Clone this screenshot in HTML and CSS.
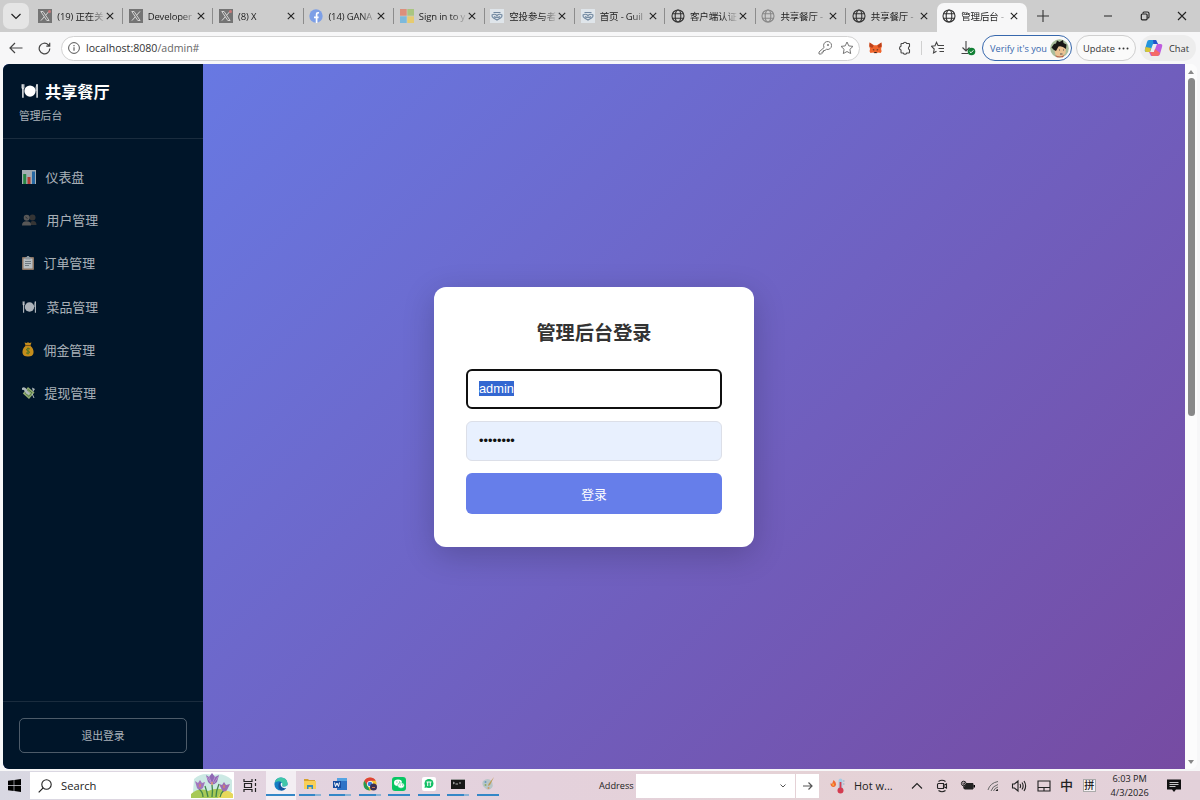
FILE: index.html
```html
<!DOCTYPE html>
<html lang="zh-CN">
<head>
    <meta charset="UTF-8">
    <meta name="viewport" content="width=device-width, initial-scale=1.0">
    <title>管理后台 - 共享餐厅</title>
    <link rel="stylesheet" href="styles.css">
</head>
<body>

<!-- shared icons -->
<svg class="sprite" aria-hidden="true">
    <symbol id="close" viewBox="0 0 8 8"><path d="M.8.8l6.4 6.4M7.2.8L.8 7.2" fill="none" stroke="#222" stroke-width="1.1"/></symbol>
    <symbol id="globe" viewBox="0 0 14 14"><g fill="none" stroke="currentColor" stroke-width="1.1"><circle cx="7" cy="7" r="6"/><ellipse cx="7" cy="7" rx="2.8" ry="6"/><path d="M1.5 4.8h11M1.5 9.2h11"/></g></symbol>
    <symbol id="x-logo" viewBox="0 0 14 14"><path fill="#747474" d="M0 0h14v14H0z"/><path d="M2.8 2.5h2.3l6 9H8.8z" fill="#747474" stroke="#ddd" stroke-width=".9"/><path d="M11 2.4L7.5 6.3M6.3 7.8l-3.4 3.8" stroke="#ddd"/></symbol>
    <symbol id="guild" viewBox="0 0 14 14"><path fill="#dfe5ea" d="M0 0h14v14H0z"/><path d="M2 6q2.500-1.700 5 .5Q9.500 4.300 12 6q.3 2-1.500 3L7 11 3.500 9Q1.700 8 2 6zM4 7.500q1.500 1.500 3 .5 1.500 1 3-.5M3.500 3.500h7" fill="none" stroke="#7188a0" stroke-width="1.100"/></symbol>
    <symbol id="plate" viewBox="0 0 16 14"><circle cx="8" cy="7" r="5"/><path d="M1.700 1v12M14.300 1v12" stroke="currentColor" stroke-width="1.200"/><path d="M.8 1v3.600h1.900V1M14.200 1q-1.300 2.500-.8 6" fill="none" stroke="currentColor" stroke-width=".6"/></symbol>
</svg>

<header class="browser">
    <div class="tab-strip">
        <button class="tab-menu"><svg width="12" height="8" viewBox="0 0 12 8"><path d="M1.500 2L6 6.500 10.500 2" fill="none" stroke="#222" stroke-width="1.200"/></svg></button>
        <div class="tab">
            <svg class="favicon"><use href="#x-logo"/><circle cx="11.500" cy="2.500" r="1.500" fill="#c97979"/></svg>
            <span class="tab-title">(19) 正在关</span><svg class="tab-close"><use href="#close"/></svg>
        </div>
        <div class="tab">
            <svg class="favicon"><use href="#x-logo"/></svg>
            <span class="tab-title">Developer</span><svg class="tab-close"><use href="#close"/></svg>
        </div>
        <div class="tab">
            <svg class="favicon"><use href="#x-logo"/><circle cx="11.500" cy="2.500" r="1.500" fill="#c97979"/></svg>
            <span class="tab-title">(8) X</span><svg class="tab-close"><use href="#close"/></svg>
        </div>
        <div class="tab">
            <svg class="favicon" viewBox="0 0 14 14"><circle cx="7" cy="7" r="6.700" fill="#7d9fe6"/><path d="M7.600 14V8.300M5 8.300h4.600M7.600 9V5.400q0-1.900 2.400-1.600" fill="none" stroke="#fff" stroke-width="1.700"/></svg>
            <span class="tab-title">(14) GANA</span><svg class="tab-close"><use href="#close"/></svg>
        </div>
        <div class="tab">
            <svg class="favicon" viewBox="0 0 14 14"><path fill="#dc8f7c" d="M0 0h6.700v6.700H0z"/><path fill="#a9c581" d="M7.300 0H14v6.700H7.300z"/><path fill="#7cb9dc" d="M0 7.300h6.700V14H0z"/><path fill="#e6cb70" d="M7.300 7.300H14V14H7.300z"/></svg>
            <span class="tab-title">Sign in to y</span><svg class="tab-close"><use href="#close"/></svg>
        </div>
        <div class="tab">
            <svg class="favicon"><use href="#guild"/></svg>
            <span class="tab-title">空投参与者</span><svg class="tab-close"><use href="#close"/></svg>
        </div>
        <div class="tab">
            <svg class="favicon"><use href="#guild"/></svg>
            <span class="tab-title">首页 - Guil</span><svg class="tab-close"><use href="#close"/></svg>
        </div>
        <div class="tab">
            <svg class="favicon"><use href="#globe"/></svg>
            <span class="tab-title">客户端认证</span><svg class="tab-close"><use href="#close"/></svg>
        </div>
        <div class="tab">
            <svg class="favicon faded"><use href="#globe"/></svg>
            <span class="tab-title">共享餐厅 -</span><svg class="tab-close"><use href="#close"/></svg>
        </div>
        <div class="tab last">
            <svg class="favicon"><use href="#globe"/></svg>
            <span class="tab-title">共享餐厅 -</span><svg class="tab-close"><use href="#close"/></svg>
        </div>
        <div class="tab active">
            <svg class="favicon"><use href="#globe"/></svg>
            <span class="tab-title">管理后台 -</span><svg class="tab-close"><use href="#close"/></svg>
        </div>
        <svg class="new-tab" viewBox="0 0 12 12"><path d="M6 0v12M0 6h12" stroke="#333" stroke-width="1.100"/></svg>
        <div class="window-controls">
            <svg viewBox="0 0 10 10"><path d="M1 5h8" stroke="#222"/></svg>
            <svg viewBox="0 0 10 10"><path d="M3 2.500V2q0-1 1-1h3.500Q9 1 9 2.500V6q0 1-1 1h-.5" fill="none" stroke="#222" stroke-width="1.100"/><rect x="1.300" y="3" width="5.800" height="5.800" rx="1" fill="none" stroke="#222" stroke-width="1.200"/></svg>
            <svg viewBox="0 0 10 10"><path d="M1 1l8 8M9 1L1 9" stroke="#222" stroke-width="1.100"/></svg>
        </div>
    </div>

    <div class="toolbar">
        <svg class="back" viewBox="0 0 14 12"><path d="M13.500 6H1M6 1L1 6l5 5" fill="none" stroke="#444" stroke-width="1.200"/></svg>
        <svg class="reload" viewBox="0 0 13 13"><path d="M11.800 6.500a5.300 5.300 0 1 1-1.600-3.800L11.500 4M11.700.8v3.400H8.300" fill="none" stroke="#444" stroke-width="1.200"/></svg>
        <div class="address-bar">
            <svg width="12" height="12" viewBox="0 0 12 12"><circle cx="6" cy="6" r="5.400" fill="none" stroke="#555"/><path d="M6 5.200v3.600M6 3v1.200" stroke="#555" stroke-width="1.100"/></svg>
            <span class="url">localhost:8080<span class="path">/admin#</span></span>
            <svg width="14" height="14" viewBox="0 0 14 14"><g fill="none" stroke="#777"><path d="M6.100 6.500A4 4 0 1 1 8.300 8.300L7 9.500H5.500V11H4v1.500L3.500 13H1v-2z"/><circle cx="10" cy="4" r=".7"/></g></svg>
            <svg class="star" width="14" height="14" viewBox="0 0 14 14"><path d="M7 1l1.800 3.900 4.200.5-3.100 2.900.8 4.300L7 10.500l-3.700 2.100.8-4.300L1 5.400l4.200-.5z" fill="none" stroke="#777"/></svg>
        </div>
        <svg class="fox" viewBox="0 0 14 12"><path d="M.7 0L5.500 3h3l4.800-3 .5 4-.8 3 .6 2.500-1 2-3-.7-1 .8h-3l-1-.8-3 .7-1-2L1.100 7 .3 4z" fill="#f0642b"/><path d="M.7 0L5 3.500 3.500 6 .4 4.500zM13.300 0L9 3.500 10.500 6l3.100-1.500z" fill="#b8401c"/><path d="M3.800 7l2.200 1-.7 1zM10.200 7L8 8l.7 1zM5.700 10.200h2.600v1.200H5.700z" fill="#302b2a"/></svg>
        <svg class="ext" viewBox="0 0 14 14"><path d="M3 3.300q0-.8.800-.8H5.300a1.800 1.800 0 0 1 3.400 0h2q.8 0 .8.800v2.200a1.800 1.800 0 0 0 0 3.300v2.400q0 .8-.8.800h-2a1.800 1.800 0 0 1-3.400 0H3.800q-.8 0-.8-.8V9a1.900 1.900 0 0 1 0-3.700z" fill="none" stroke="#444" stroke-width="1.100" stroke-linejoin="round"/></svg>
        <span class="divider"></span>
        <svg class="favs" viewBox="0 0 14 14"><path d="M9 4.500H7L5.500 1.300 4 4.700l-3.500.6L3.200 8l-.7 4 3-1.700M7.500 7.500H13M8.500 10.500H13M9 4.500h4" fill="none" stroke="#444" stroke-width="1.100"/></svg>
        <svg class="download" viewBox="0 0 16 16"><path d="M6 1v10M2.500 7.500L6 11l3.500-3.500M1.500 13.500H8" fill="none" stroke="#444" stroke-width="1.100"/><circle cx="11.500" cy="11.500" r="3.800" fill="#128035"/><path d="M9.700 11.500l1.300 1.300 2.400-2.500" fill="none" stroke="#fff"/></svg>
        <button class="verify">Verify it's you
            <svg width="19" height="19" viewBox="0 0 19 19"><circle cx="9.500" cy="9.500" r="9.300" fill="#a8bd9b"/><path d="M4 9q6-5 12 0l-.5 5.500q-5 5-10 1.500z" fill="#eac293"/><path d="M1.500 8.500L4 5l2-.5 1-3 2.500 1.500L13 1l.5 3 3 1.500-.5 4.500Q12 6.500 8.500 7.500L6 12l-2-1z" fill="#181715"/><path d="M9 11h1M13 11h1M10 15h2.500" stroke="#555"/><path d="M5 16q5 3 9 0l-1 2.300H7z" fill="#c9553e"/></svg>
        </button>
        <button class="update">Update <svg width="11" height="3" viewBox="0 0 11 3"><g fill="#333"><circle cx="1.500" cy="1.500" r="1"/><circle cx="5.500" cy="1.500" r="1"/><circle cx="9.500" cy="1.500" r="1"/></g></svg></button>
        <button class="chat">
            <svg width="19" height="18" viewBox="0 0 19 18"><path d="M5 1h7l1.500 4H9L6 13H2.500Q0 13 1 10L3 3q.5-2 2-2z" fill="#2495dc"/><path d="M1.500 8L7 9l-1 4H2.500Q0 13 1.500 8z" fill="#d5c437"/><path d="M9 1h3l2 4H9.500z" fill="#2453cb"/><path d="M13 5h3.500q2.500 0 1.500 3l-2 7q-.5 2-2.500 2H7l-2-4h5z" fill="#bf5cdf"/><path d="M6 13h4l1-3 5 4q-.8 3-2.500 3H8z" fill="#f46a67"/></svg>
            Chat
        </button>
    </div>
</header>

<div class="page">
    <div class="viewport">
        <aside class="sidebar">
            <div class="sidebar-header">
                <h1><svg class="plate" width="18" height="16"><use href="#plate"/></svg>共享餐厅</h1>
                <p>管理后台</p>
            </div>
            <nav class="menu">
                <a href="#"><svg width="14" height="14" viewBox="0 0 14 14"><path fill="#a5adb2" d="M0 0h14v14H0z"/><path fill="#278644" d="M1.200 4h3v10h-3z"/><path fill="#b43c34" d="M5.500 7h3v7h-3z"/><path fill="#2869a3" d="M10 1.500h3V14h-3z"/></svg><span>仪表盘</span></a>
                <a href="#"><svg width="15" height="14" viewBox="0 0 15 14"><g fill="#353535"><circle cx="10.500" cy="4.500" r="3"/><path d="M8 12q0-4 3-4 3.500 0 3.500 4z"/></g><g fill="#575757"><circle cx="4.700" cy="4.700" r="3"/><path d="M0 12.500q0-4.200 4.500-4.200T9 12.500z"/></g><path d="M3.500 4l2 1.500" stroke="#292d33"/></svg><span>用户管理</span></a>
                <a href="#"><svg width="12" height="14" viewBox="0 0 12 14"><rect y="1" width="12" height="13" rx="1" fill="#8c7463"/><path fill="#b8bec2" d="M1.500 2.500h9v10h-9z"/><path fill="#8d969c" d="M3.500 1h1.200a1.300 1.300 0 0 1 2.600 0h1.200v2.500h-5z"/><path d="M3 5.500h6M3 7.500h6M3 9.500h4" stroke="#5c6871" stroke-width=".8"/></svg><span>订单管理</span></a>
                <a href="#"><svg class="plate" width="15" height="14"><use href="#plate"/></svg><span>菜品管理</span></a>
                <a href="#"><svg width="12" height="15" viewBox="0 0 12 15"><path d="M2.500.5l2 .6L6 .3l1.500.8 2-.6-1.200 3.200Q12 6.500 11.500 11q-.5 3.500-5.500 3.500T.5 11Q0 6.500 3.700 3.700z" fill="#c58d1b"/><path d="M3.500 3.500h5" stroke="#77501a"/><path d="M8 7Q6 5.800 4.800 7T6 9t1.500 1.700-3.500.3M6 5.500v7" fill="none" stroke="#507522"/></svg><span>佣金管理</span></a>
                <a href="#"><svg width="13" height="14" viewBox="0 0 13 14"><path d="M6 1l6.500 5.500L7 13 .8 7.500z" fill="#91aa70"/><path d="M6 3.500l4 3.300L7 10.500 3.200 7z" fill="none" stroke="#4f7744"/><path d="M0 2q3-2 5 2 1 3 3 3l-1 2Q4 8 3 6 2 3 0 4zM10 1.500l3 1.500-2 3z" fill="#aeb8bb"/><path d="M10 7.500l2 4.500" stroke="#aeb8bb"/></svg><span>提现管理</span></a>
            </nav>
            <div class="sidebar-footer">
                <button>退出登录</button>
            </div>
        </aside>

        <main>
            <form class="login-box">
                <h2>管理后台登录</h2>
                <div class="field focused"><span class="selected">admin</span></div>
                <div class="field filled"><span>••••••••</span></div>
                <button type="button">登录</button>
            </form>
        </main>
    </div>
    <div class="scrollbar">
        <svg width="6" height="4" viewBox="0 0 6 4"><path d="M3 0l3 4H0z" fill="#888"/></svg>
        <div class="thumb"></div>
        <svg class="down" width="6" height="4" viewBox="0 0 6 4"><path d="M0 0h6L3 4z" fill="#888"/></svg>
    </div>
</div>

<footer class="taskbar">
    <div class="start"><svg width="13" height="13" viewBox="0 0 13 13"><path d="M0 1.800L5.700 1v5H0zM6.300.9L13 0v6H6.300zM0 6.700h5.700v5.200L0 11.200zM6.300 6.700H13V13l-6.700-.9z"/></svg></div>
    <div class="search">
        <svg width="14" height="14" viewBox="0 0 14 14"><circle cx="8.500" cy="5.500" r="4.700" fill="none" stroke="#222" stroke-width="1.100"/><path d="M5.200 8.800L.7 13.300" stroke="#222" stroke-width="1.200"/></svg>
        <span>Search</span>
        <svg class="crocus" width="43" height="25" viewBox="0 0 43 25"><path d="M3 6q8-7 18-4 12-3 20 5v12H2z" fill="#cce9e4"/><path d="M0 21q8-7 17-3 14-6 25 4v3H0z" fill="#a6c957"/><path d="M28 22q7-8 14-1v4H27z" fill="#e6d85b"/><g fill="none" stroke="#42854b" stroke-width="1.300"><path d="M21 12q1 6 0 12M8 16q4 3 4 8M33 17q-3 3-4 7M14 13q2 6 3 11M28 11q-3 7-3 13"/></g><path d="M15 2l3 2 3-4 3 4 4-2-2 7q-5 5-9 0z" fill="#9069b5"/><path d="M18 4l3 7 3-7M16 4l4 6M27 4l-4 6" fill="none" stroke="#c49bd5" stroke-width=".8"/><path d="M4 8l3 2 2-3 2 3 3-1-2 6q-4 3-6 0z" fill="#a276bd"/><path d="M28 11l3 1 2-3 2 3 4-1-3 6q-3 3-5 0z" fill="#9c6eb4"/><path d="M21 9v3M9 11v3M33 12v3" stroke="#ec9441"/></svg>
    </div>
    <div class="task-view"><svg width="14" height="13" viewBox="0 0 14 13"><path d="M1 0v2.500h8V0M1 13v-2.500h8V13M1.500 4.500h7v4h-7zM12.500 0v2M12.500 4v3M12.500 9v4" fill="none" stroke="#222" stroke-width="1.200"/></svg></div>
    <div class="apps">
        <div class="app current"><svg viewBox="0 0 14 14"><circle cx="7" cy="7" r="6.600" fill="#147dc3"/><path d="M.5 6Q2 .4 7 .4q6 0 6.600 6 0 3-4 3.200-2 0-1.500-1Q9 5 5.500 4.300 2 4 .5 6z" fill="#40c7a8"/><path d="M4.500 8q0-3 2.500-3-1.700 4 2.500 5.500 2 .4 3-.3Q10 14 7 13.500 4 12 4.500 8z" fill="#15539d"/><path d="M7 5.800q2 .2 1.300 2-.8 1.800 1.700 1.900 2.500 0 3.500-1.600v3l-3 .2Q5.500 10 7 5.800z" fill="#eef8fa"/></svg></div>
        <div class="app multi"><svg viewBox="0 0 14 14"><path d="M1 2h4l1 1h6v3H1z" fill="#d6a12e"/><path d="M1 4h12v8H1z" fill="#f8cf59"/><path d="M4 8h6v4H8.500v-2h-3v2H4z" fill="#348bc3"/></svg></div>
        <div class="app multi"><svg viewBox="0 0 14 14"><path d="M4 1h10v12H4z" fill="#2e73c6"/><path d="M4 1h10v3H4z" fill="#55a4e3"/><path d="M0 4h8v7H0z" fill="#174b9e"/><path d="M1.500 5.500l1 4L4 6l1.500 3.500 1-4" fill="none" stroke="#fff"/></svg></div>
        <div class="app multi"><svg viewBox="0 0 14 14"><circle cx="7" cy="7" r="6.500" fill="#f4c22f"/><path d="M1.300 3.700Q3.500.5 7 .5q4 0 5.800 3.300H7L4 8.500z" fill="#df4237"/><path d="M1.300 3.700L5 9.500l2 4Q.5 13 .5 7q0-2 .8-3.300z" fill="#269953"/><circle cx="7" cy="7" r="3" fill="#fff"/><circle cx="7" cy="7" r="2.300" fill="#367adc"/><circle cx="10.500" cy="10" r="3.500" fill="#3b2e52"/><path d="M9 10.500h3" stroke="#c87956"/></svg></div>
        <div class="app"><svg viewBox="0 0 14 14"><rect width="14" height="14" rx="3" fill="#08c663"/><ellipse cx="6" cy="5.800" rx="4" ry="3.300" fill="#fff"/><ellipse cx="9" cy="8.500" rx="3.300" ry="2.700" fill="#fff" stroke="#08c663" stroke-width=".5"/><path d="M4.500 5h.8M7 5h.8M7.800 8h.7M10 8h.7" stroke="#08a951"/></svg></div>
        <div class="app"><svg viewBox="0 0 14 14"><rect width="14" height="14" rx="2" fill="#fff"/><circle cx="7" cy="6.500" r="4.500" fill="#13bf65"/><path d="M3 8l-.5 3L6 10z" fill="#13bf65"/><path d="M4.500 5h5M5.700 5v4M8.300 5v4" stroke="#fff"/></svg></div>
        <div class="app multi"><svg viewBox="0 0 14 14"><path fill="#171717" d="M0 2h14v10H0z"/><path fill="#999" d="M0 2h14v1H0z"/><path d="M2 5l1.500 1L2 7M4.500 7H7M8 6h2" fill="none" stroke="#ddd" stroke-width=".8"/></svg></div>
        <div class="app"><svg viewBox="0 0 14 14"><path d="M2 4q5-4 8.500 0 3 5-1 8-3 2-5.500-1-4-3-2-7z" fill="#b8c6c8"/><path d="M13 0L9 8l-2 1 .5-2z" fill="#bd9b54"/><circle cx="4.500" cy="5" r="1" fill="#689ac0"/><circle cx="4.500" cy="8" r="1" fill="#8faa68"/><circle cx="7.500" cy="11" r="1" fill="#cf9b62"/></svg></div>
    </div>
    <label class="address-label">Address</label>
    <div class="address-box">
        <svg width="6" height="4" viewBox="0 0 6 4"><path d="M.5.500L3 3 5.500.5" fill="none" stroke="#555"/></svg>
    </div>
    <div class="go"><svg width="10" height="8" viewBox="0 0 10 8"><path d="M0 4h9M5.500.5L9 4 5.500 7.500" fill="none" stroke="#555" stroke-width="1.200"/></svg></div>
    <div class="weather">
        <svg width="15" height="16" viewBox="0 0 15 16"><path d="M3.500 2q3 2 2.500 5-.8 2.500-3.200 2Q-.2 8 .8 5L2 6z" fill="#f16a32"/><path d="M3 5q1.500 1.500.5 3-1.500 0-1-2z" fill="#fac147"/><rect x="8.500" y=".5" width="4" height="12" rx="2" fill="#a7cde4"/><circle cx="10.500" cy="12.500" r="3" fill="#d43c50"/><path d="M10.500 4v8" stroke="#d43c50" stroke-width="1.800"/><path d="M13 3h1.500M13 6h1.500" stroke="#89adc3"/></svg>
        <span>Hot w...</span>
    </div>
    <div class="tray">
        <svg viewBox="0 0 16 16"><path d="M3 10.500l5-5 5 5" fill="none" stroke="#222" stroke-width="1.100"/></svg>
        <svg viewBox="0 0 16 16"><path d="M4.500 3.500q3.500-2.500 7 0M4.500 12.500q3.500 2.500 7 0M4.500 5.500h5v5h-5q-1 0-1-1v-3q0-1 1-1zM9.500 7.500l3-1.500v4l-3-1.500" fill="none" stroke="#222" stroke-width="1.100"/></svg>
        <svg viewBox="0 0 16 16"><path d="M5.500 5.500H13v5.500H4.500V8.500" fill="#222" stroke="#222"/><path d="M13.500 7H15v2.500h-1.500z"/><circle cx="3.700" cy="5.500" r="2.300" fill="#e4d1d8" stroke="#222"/><path d="M3 4.500v1.700h1.500V4.500M3.700 7.500v3" fill="none" stroke="#222" stroke-width=".9"/></svg>
        <svg viewBox="0 0 16 16"><g fill="none" stroke="#666"><path d="M3 12Q5 5 13 3.500M6 13q1.500-5 7-6.500M8.500 13q1-3 4.500-4"/></g><path d="M10.500 13q.5-1.500 2.500-2v2z" fill="#222"/></svg>
        <svg viewBox="0 0 16 16"><path d="M1.500 6h2L7 3v10l-3.500-3h-2zM9 6q1.200 2 0 4M11 4.500q2.300 3.500 0 7M13 3q3.300 5 0 10" fill="none" stroke="#222" stroke-width="1.100"/></svg>
        <svg viewBox="0 0 16 16"><path d="M2 3h12v10H2zM2 9.500h12M8 9.500V13" fill="none" stroke="#222" stroke-width="1.100"/></svg>
        <span class="ime">中</span>
        <span class="ime boxed">拼</span>
    </div>
    <div class="clock">6:03 PM<br>4/3/2026</div>
    <svg class="notify" width="14" height="14" viewBox="0 0 14 14"><path d="M0 .5h14v10H9L7 13l-2-2.500H0z" fill="#111"/><path d="M2.500 3.500h9M2.500 5.500h9M2.500 7.500h6" stroke="#ddd" stroke-width=".9"/></svg>
</footer>

</body>
</html>
```
FILE: styles.css
```css
* {
    box-sizing: border-box;
}

body {
    margin: 0;
    width: 1200px;
    height: 800px;
    overflow: hidden;
    display: flex;
    flex-direction: column;
    font-family: 'Open Sans', 'Noto Sans CJK SC', sans-serif;
    background: #f7f7f8;
}

svg {
    flex-shrink: 0;
    display: block;
}

button {
    font-family: inherit;
    padding: 0;
}

.sprite {
    display: none;
}

/* browser chrome */
.tab-strip {
    height: 32px;
    background: #cdcdcd;
    display: flex;
    align-items: center;
    padding-left: 3px;
}

.tab-menu {
    width: 26px;
    height: 26px;
    margin-right: 3.600px;
    border: none;
    border-radius: 7px;
    background: #e5e5e5;
    display: flex;
    align-items: center;
    justify-content: center;
}

.tab {
    width: 90.400px;
    height: 29px;
    flex-shrink: 0;
    align-self: flex-end;
    display: flex;
    align-items: center;
    padding: 0 0 3px 5.700px;
    background: linear-gradient(#8c8c8c, #8c8c8c) right 5px / 1px 16px no-repeat;
}

.tab.last {
    background: none;
}

.tab.active {
    background: #f7f7f8;
    border-radius: 7px 7px 0 0;
}

.favicon {
    width: 14px;
    height: 14px;
    color: #333;
}

.favicon.faded {
    color: #888;
}

.tab-title {
    width: 48px;
    margin: 0 1px 0 5px;
    font-size: 9.500px;
    letter-spacing: -0.15px;
    color: #222;
    white-space: nowrap;
    mask-image: linear-gradient(90deg, #000 68%, rgba(0, 0, 0, 0.1) 98%);
}

.tab-close {
    width: 8px;
    height: 8px;
}

.new-tab {
    width: 12px;
    height: 12px;
    margin-left: 10px;
}

.window-controls {
    flex: 1;
    display: flex;
    justify-content: flex-end;
    gap: 27px;
    padding-right: 13.500px;
}

.window-controls svg {
    width: 10px;
    height: 10px;
}

.toolbar {
    height: 32px;
    display: flex;
    align-items: center;
    padding-left: 9px;
    font-size: 9.600px;
    color: #333;
}

.back {
    width: 14px;
    height: 12px;
    margin-right: 15px;
}

.reload {
    width: 13px;
    height: 13px;
    margin-right: 10px;
}

.address-bar {
    width: 799px;
    height: 25px;
    border: 1px solid #d2d2d2;
    border-radius: 13px;
    background: #fff;
    display: flex;
    align-items: center;
    padding: 0 5px 0 6px;
}

.url {
    flex: 1;
    margin: -1px 0 0 6px;
    font-size: 10.600px;
    color: #333;
}

.url .path {
    color: #666;
}

.star {
    margin-left: 8px;
}

.fox {
    width: 13px;
    height: 12px;
    margin-left: 9px;
}

.ext {
    width: 14px;
    height: 14px;
    margin-left: 16px;
}

.divider {
    width: 1px;
    height: 14px;
    margin: 0 9px;
    background: #d0d0d0;
}

.favs {
    width: 14px;
    height: 14px;
}

.download {
    width: 16px;
    height: 16px;
    margin: 0 6px 0 15px;
}

.verify,
.update,
.chat {
    height: 26px;
    border-radius: 13px;
    border: 1px solid #cfcfcf;
    background: #fafafa;
    display: flex;
    align-items: center;
    justify-content: space-between;
    flex-shrink: 0;
    font-size: 9.300px;
    color: #333;
    white-space: nowrap;
}

.verify {
    width: 90px;
    padding: 0 2px 0 7px;
    border-color: #3768ad;
    color: #3768ad;
    font-size: 9.200px;
}

.update {
    width: 60px;
    margin-left: 4px;
    padding: 0 6px;
}

.chat {
    width: 56px;
    margin-left: 4px;
    padding: 0 7px 0 4px;
    border: none;
    background: #ededed;
}

/* page */
.page {
    height: 705px;
    padding-left: 3px;
    display: flex;
}

.viewport {
    width: 1182px;
    display: flex;
    border-radius: 6px 0 0 6px;
    overflow: hidden;
    background: linear-gradient(135deg, #667eea 0%, #764ba2 100%);
}

.sidebar {
    width: 200px;
    background: #001529;
    display: flex;
    flex-direction: column;
    font-family: 'Noto Sans CJK SC', sans-serif;
    color: rgba(255, 255, 255, 0.68);
}

.sidebar-header {
    height: 75px;
    padding: 16px;
    border-bottom: 1px solid rgba(255, 255, 255, 0.1);
}

.sidebar-header h1 {
    display: flex;
    align-items: center;
    gap: 6px;
    margin: 0;
    padding-left: 2px;
    font-size: 16.200px;
    line-height: 22px;
    color: #fff;
}

.sidebar-header p {
    margin: 5px 0 0;
    font-size: 10.800px;
    line-height: 16px;
}

.plate {
    fill: currentColor;
}

.menu {
    flex: 1;
    padding-top: 16.500px;
}

.menu a {
    height: 43.200px;
    display: flex;
    align-items: center;
    gap: 10px;
    padding-left: 18.500px;
    font-size: 12.900px;
    color: inherit;
    text-decoration: none;
}

.menu span {
    margin-top: -1px;
}

.sidebar-footer {
    height: 68px;
    padding: 16px;
    border-top: 1px solid rgba(255, 255, 255, 0.1);
}

.sidebar-footer button {
    width: 100%;
    height: 35px;
    padding-bottom: 1px;
    border: 1px solid rgba(255, 255, 255, 0.3);
    border-radius: 5px;
    background: transparent;
    color: inherit;
    font-size: 10.800px;
}

/* login form, centred on the whole viewport */
main {
    flex: 1;
    padding-right: 200px;
    display: flex;
    align-items: center;
    justify-content: center;
}

.login-box {
    width: 320px;
    height: 260px;
    padding: 32px;
    display: flex;
    flex-direction: column;
    gap: 12px;
    background: #fff;
    border-radius: 12px;
    box-shadow: 0 8px 32px rgba(0, 0, 0, 0.2);
    font-family: 'Noto Sans CJK SC', sans-serif;
}

.login-box h2 {
    margin: -1px 0 11px;
    font-size: 19.200px;
    line-height: 28px;
    text-align: center;
    color: #333;
}

.field {
    height: 40px;
    display: flex;
    align-items: center;
    padding: 0 11px;
    border: 1px solid #dcdfe8;
    border-radius: 6px;
    font-family: 'Liberation Sans', sans-serif;
    font-size: 12.800px;
}

.field.focused {
    border: 2px solid #101010;
}

.selected {
    background: #3367d1;
    color: #fff;
    line-height: 15px;
}

.field.filled {
    height: 40.500px;
    padding-left: 12px;
    background: #e8f0fe;
    color: #111;
}

.login-box button {
    height: 41px;
    border: none;
    border-radius: 6px;
    background: #667eea;
    color: #fff;
    font-size: 12.800px;
}

.scrollbar {
    width: 12px;
    margin-right: 3px;
    padding: 6px 0 5px;
    display: flex;
    flex-direction: column;
    align-items: center;
    background: #fcfcfc;
    border-radius: 0 6px 6px 0;
}

.thumb {
    width: 7px;
    height: 338px;
    margin-top: 4px;
    border-radius: 4px;
    background: #888;
}

.scrollbar .down {
    margin-top: auto;
}

/* taskbar */
.taskbar {
    height: 29px;
    margin-top: 2px;
    display: flex;
    align-items: center;
    background: linear-gradient(90deg, #d8d8e2 0%, #e3d4e0 20%, #e4d1dc 45%, #e5d2d6 65%, #e3d1da 100%);
    font-size: 11px;
    color: #222;
}

.start {
    width: 30px;
    padding-left: 8px;
}

.search {
    width: 204px;
    height: 27px;
    background: #fff;
    display: flex;
    align-items: center;
    padding-left: 8px;
    font-size: 11.200px;
}

.search span {
    flex: 1;
    margin-left: 9px;
}

.task-view {
    width: 32px;
    padding-left: 9px;
}

.apps {
    display: flex;
    width: 333px;
}

.app {
    width: 29.600px;
    height: 29px;
    display: flex;
    justify-content: center;
    padding-top: 6px;
    background: linear-gradient(#3487c7, #3487c7) center 23px / 22px 2px no-repeat;
}

.app svg {
    width: 14px;
    height: 14px;
}

.app.multi {
    background: linear-gradient(90deg, #3487c7 75%, #8bb3d6 75%) center 23px / 22px 2px no-repeat;
}

.app.current {
    background: linear-gradient(#3487c7, #3487c7) center 23px / 29px 2px no-repeat, #f3eef3;
}

.address-label {
    width: 37px;
    font-size: 9.200px;
}

.address-box {
    width: 159px;
    height: 24px;
    display: flex;
    align-items: center;
    justify-content: flex-end;
    padding-right: 9px;
    background: #fff;
}

.go {
    width: 23px;
    height: 24px;
    margin-left: 1px;
    display: flex;
    align-items: center;
    justify-content: center;
    background: #fff;
}

.weather {
    display: flex;
    align-items: center;
    gap: 9px;
    width: 74px;
    margin-left: 11px;
    font-size: 11px;
    white-space: nowrap;
}

.tray {
    display: flex;
    align-items: center;
    gap: 9.600px;
    margin-left: 4.500px;
}

.tray svg {
    width: 16px;
    height: 16px;
}

.ime {
    width: 13px;
    margin: -2px 0 0 -2px;
    font-size: 13px;
    font-weight: 500;
    line-height: 14px;
    text-align: center;
}

.ime.boxed {
    height: 13px;
    margin: 0;
    background: #f7f2f4;
    border: 1px solid #aaa;
    font-size: 10px;
    line-height: 10px;
}

.clock {
    width: 46px;
    margin-left: 11px;
    font-size: 9.200px;
    line-height: 13.500px;
    text-align: center;
}

.notify {
    margin-left: 14px;
}
```
